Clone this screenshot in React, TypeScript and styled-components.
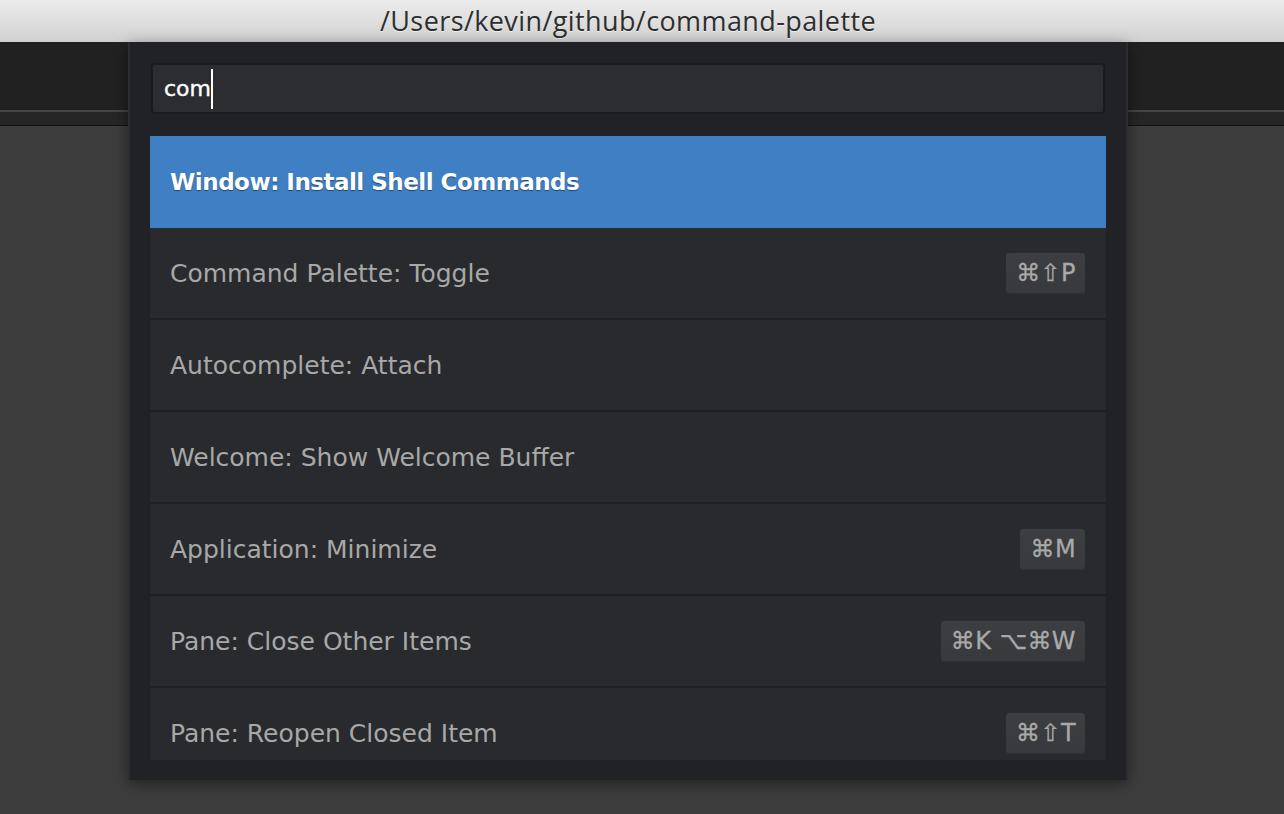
import React from 'react';
import styled, { createGlobalStyle } from 'styled-components';

type Command = {
  title: string;
  keys?: string;
};

const commands: Command[] = [
  { title: 'Window: Install Shell Commands' },
  { title: 'Command Palette: Toggle', keys: '⌘⇧P' },
  { title: 'Autocomplete: Attach' },
  { title: 'Welcome: Show Welcome Buffer' },
  { title: 'Application: Minimize', keys: '⌘M' },
  { title: 'Pane: Close Other Items', keys: '⌘K ⌥⌘W' },
  { title: 'Pane: Reopen Closed Item', keys: '⌘⇧T' },
];

const GlobalStyle = createGlobalStyle`
  html, body {
    margin: 0;
    padding: 0;
    background: #3d3d3d;
    overflow: hidden;
  }
  * {
    box-sizing: border-box;
  }
`;

const Window = styled.div`
  position: relative;
  width: 1284px;
  height: 814px;
  display: flex;
  flex-direction: column;
  background: #3d3d3d;
  font-family: 'DejaVu Sans', 'Liberation Sans', sans-serif;
`;

const TitleBar = styled.div`
  height: 42px;
  flex-shrink: 0;
  display: flex;
  align-items: center;
  justify-content: center;
  padding-right: 28px;
  padding-bottom: 1px;
  background: linear-gradient(#ececec, #d1d1d1);
  color: #2e2e2e;
  font-family: 'Open Sans', 'DejaVu Sans', sans-serif;
  font-size: 27px;
  letter-spacing: 0.4px;
  text-shadow: 0 1px 0 rgba(255, 255, 255, 0.6);
`;

const Toolbar = styled.div`
  height: 70px;
  flex-shrink: 0;
  background: #212121;
  border-bottom: 2px solid #454545;
`;

const TabStrip = styled.div`
  height: 14px;
  flex-shrink: 0;
  background: #262626;
  border-bottom: 1px solid #111;
`;

const Editor = styled.div`
  flex: 1;
  background: #3d3d3d;
`;

const Palette = styled.div`
  position: absolute;
  top: 42px;
  left: 128px;
  width: 1000px;
  height: 738px;
  display: flex;
  flex-direction: column;
  gap: 22px;
  padding: 21px 20px 20px 20px;
  background: #212225;
  border-left: 2px solid #2c2d30;
  border-right: 2px solid #2c2d30;
  box-shadow: 0 4px 14px rgba(0, 0, 0, 0.45);
`;

const SearchBox = styled.div`
  height: 51px;
  flex-shrink: 0;
  margin-left: 1px;
  margin-right: 1px;
  display: flex;
  align-items: center;
  padding-left: 11px;
  background: #2c2d30;
  border: 2px solid #1a1b1d;
  border-radius: 4px;
  color: #fff;
  font-size: 22px;
  -webkit-text-stroke: 0.4px #fff;
`;

const Caret = styled.span`
  display: inline-block;
  width: 2px;
  height: 40px;
  margin-left: 0;
  background: #fff;
`;

const List = styled.ul`
  flex: 1;
  margin: 0;
  padding: 0;
  list-style: none;
  overflow: hidden;
`;

const Row = styled.li<{ selected?: boolean }>`
  height: 92px;
  display: flex;
  align-items: center;
  justify-content: space-between;
  padding: ${({ selected }) => (selected ? '2px' : '0')} 20px 0 20px;
  background: ${({ selected }) => (selected ? '#3f80c4' : '#292a2d')};
  border-bottom: 2px solid ${({ selected }) => (selected ? '#3f80c4' : '#1f2023')};
  color: ${({ selected }) => (selected ? '#fff' : '#a8a8a8')};
  font-size: ${({ selected }) => (selected ? '23px' : '25px')};
  font-weight: ${({ selected }) => (selected ? 'bold' : 'normal')};
  text-shadow: ${({ selected }) => (selected ? '0 1px 1px rgba(0,0,0,0.45)' : 'none')};
  letter-spacing: ${({ selected }) => (selected ? '-0.5px' : '0')};
`;

const Keys = styled.kbd`
  height: 43px;
  display: flex;
  align-items: center;
  padding: 0 9px 0 10px;
  background: linear-gradient(#3d3e41, #38393c);
  border: 1px solid #2a2b2e;
  border-radius: 4px;
  box-shadow: inset 0 -1px 0 rgba(0, 0, 0, 0.15);
  color: #a9a9a9;
  font-family: 'DejaVu Sans', sans-serif;
  font-size: 24px;
  letter-spacing: 0.4px;
  -webkit-text-stroke: 0.3px #a9a9a9;
`;

export default function App() {
  return (
    <>
      <GlobalStyle />
      <Window>
        <TitleBar>/Users/kevin/github/command-palette</TitleBar>
        <Toolbar />
        <TabStrip />
        <Editor />
        <Palette>
          <SearchBox>
            com
            <Caret />
          </SearchBox>
          <List>
            {commands.map((c, i) => (
              <Row key={c.title} selected={i === 0}>
                <span>{c.title}</span>
                {c.keys && <Keys>{c.keys}</Keys>}
              </Row>
            ))}
          </List>
        </Palette>
      </Window>
    </>
  );
}
